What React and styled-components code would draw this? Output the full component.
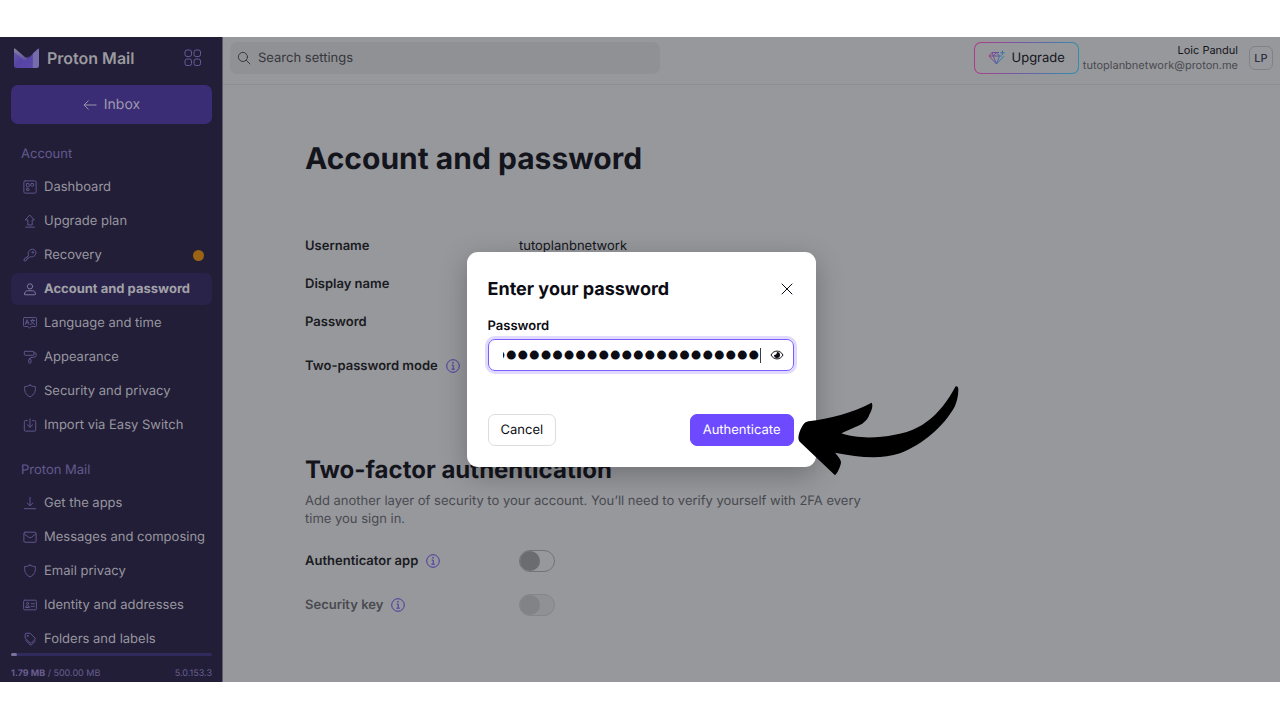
import React, { useLayoutEffect, useRef } from "react";
import styled, { createGlobalStyle } from "styled-components";

const Global = createGlobalStyle`
  *, *::before, *::after { box-sizing: border-box; }
  body { margin: 0; background: #fff; font-family: Inter, "Liberation Sans", sans-serif; font-size: 13px; color: #14151c; text-rendering: geometricPrecision; }
  button, input { font: inherit; color: inherit; text-rendering: inherit; }
  h1, h2, p, ul, dl, dd { margin: 0; padding: 0; }
  a { color: inherit; text-decoration: none; }
`;

const Page = styled.div`
  display: flex;
  flex-direction: column;
  height: 100vh;
  padding: 37px 0 38px;
`;

const Shell = styled.div`
  position: relative;
  display: flex;
  flex: 1;
  min-height: 0;
  overflow: hidden;
  background: #97989c;
`;

const Sidebar = styled.aside`
  display: flex;
  flex-direction: column;
  flex: 0 0 223px;
  min-width: 0;
  padding: 0 10px 0 11px;
  background: #221e38;
  border-right: 1px solid #5d5b6a;
`;

const Brand = styled.div`
  display: flex;
  align-items: center;
  flex: 0 0 48px;
  padding: 0 10px 6px 2px;
  gap: 7px;
`;

const BrandName = styled.span`
  flex: 1;
  font-size: 16px;
  font-weight: 600;
  color: #9b9a9f;
`;

const PlainButton = styled.button`
  display: flex;
  padding: 0;
  border: 0;
  background: none;
  color: ${(p) => p.$color};
`;

const InboxLink = styled.a`
  display: flex;
  align-items: center;
  justify-content: center;
  flex: 0 0 39px;
  gap: 7px;
  border-radius: 7px;
  background: #3b2d75;
  color: #9d99ac;
  font-size: 14px;
`;

const Nav = styled.nav`
  flex: 1;
  min-height: 0;
  margin-top: 13px;
  overflow: hidden;
`;

const NavHeading = styled.h2`
  display: flex;
  align-items: center;
  height: 34px;
  padding-left: 10px;
  font-size: 13px;
  font-weight: 400;
  color: #625a8e;
`;

const NavList = styled.ul`
  display: flex;
  flex-direction: column;
  gap: 2px;
  list-style: none;
  margin-bottom: 12px;
`;

const NavLink = styled.a`
  display: flex;
  align-items: center;
  height: 32px;
  padding: 0 8px 0 12px;
  gap: 7px;
  border-radius: 7px;
  background: ${(p) => (p.$active ? "#292349" : "transparent")};
  color: ${(p) => (p.$active ? "#a3a2a8" : "#98969f")};
  font-weight: ${(p) => (p.$active ? 700 : 400)};
  svg { flex: none; color: ${(p) => (p.$active ? "#827ca5" : "#60588c")}; }
`;

const NavText = styled.span`
  flex: 1;
  min-width: 0;
  white-space: nowrap;
`;

const Dot = styled.span`
  width: 11px;
  height: 11px;
  border-radius: 50%;
  background: #9b6414;
`;

const Storage = styled.div`
  flex: 0 0 29px;
`;

const Meter = styled.div`
  height: 3px;
  border-radius: 2px;
  background: #312a5c;
`;

const MeterFill = styled.div`
  height: 3px;
  border-radius: 2px;
  background: #7a739d;
`;

const StorageText = styled.div`
  display: flex;
  justify-content: space-between;
  padding-top: 12px;
  font-size: 9px;
  line-height: 12px;
  color: #675f90;
`;

const Main = styled.main`
  flex: 1;
  min-width: 0;
`;

const TopBar = styled.header`
  display: flex;
  align-items: center;
  height: 48px;
  padding: 0 7px 6px;
  border-bottom: 1px solid #8d8e92;
`;

const Search = styled.label`
  display: flex;
  align-items: center;
  flex: 0 1 430px;
  height: 32px;
  margin-right: auto;
  padding: 0 7px;
  gap: 7px;
  border-radius: 7px;
  background: #909195;
  color: #36373d;
`;

const SearchInput = styled.input`
  flex: 1;
  min-width: 0;
  padding: 0;
  border: 0;
  outline: 0;
  background: none;
  &::placeholder { color: #36373d; opacity: 1; }
`;

const UpgradeButton = styled.button`
  display: flex;
  align-items: center;
  height: 32px;
  padding: 0 13px;
  gap: 7px;
  border: 1px solid transparent;
  border-radius: 7px;
  background: linear-gradient(#97989c, #97989c) padding-box, linear-gradient(100deg, #b23a82, #6c5fa8 50%, #2f8fa8) border-box;
`;

const User = styled.div`
  display: flex;
  flex-direction: column;
  margin: 0 11px 0 4px;
  font-size: 11px;
  line-height: 15px;
  text-align: right;
`;

const Email = styled.span`
  color: #494a50;
`;

const Avatar = styled.button`
  width: 24px;
  height: 24px;
  padding: 0;
  border: 1px solid #818286;
  border-radius: 6px;
  background: none;
  color: #2b3040;
  font-size: 11px;
  font-weight: 500;
`;

const Content = styled.div`
  max-width: 720px;
  padding: 54px 82px 0;
`;

const Title = styled.h1`
  margin-bottom: 48px;
  font-size: 30px;
  line-height: 40px;
  font-weight: 700;
  white-space: nowrap;
`;

const Subtitle = styled.h2`
  margin: 63px 0 6px;
  font-size: 24px;
  line-height: 32px;
  font-weight: 700;
`;

const Description = styled.p`
  max-width: 570px;
  margin: 0 -20px 11px 0;
  line-height: 18px;
  color: #494a50;
`;

const Row = styled.div`
  display: flex;
  align-items: center;
  height: ${(p) => p.$height}px;
`;

const RowLabel = styled.div`
  display: flex;
  align-items: center;
  width: 214px;
  gap: 8px;
  font-weight: 600;
  color: ${(p) => (p.$muted ? "#494a50" : "#1a1b22")};
`;

const Switch = styled.input`
  appearance: none;
  display: flex;
  align-items: center;
  width: 36px;
  height: 22px;
  margin: 0;
  border: 1px solid #727377;
  border-radius: 11px;
  background: transparent;
  &::before {
    content: "";
    width: 20px;
    height: 20px;
    border-radius: 50%;
    background: #6b6c70;
  }
  &:disabled {
    border-color: #858689;
    background: #909195;
  }
  &:disabled::before { background: #828387; }
`;

const Overlay = styled.div`
  position: absolute;
  inset: 0;
  display: flex;
  align-items: center;
  justify-content: center;
  padding-left: 2px;
`;

const Dialog = styled.form`
  position: relative;
  width: 349px;
  padding: 21px 22px 21px 21px;
  border-radius: 11px;
  background: #fff;
  color: #0c0c14;
  box-shadow: 0 8px 28px rgba(0, 0, 0, 0.26);
`;

const DialogHeader = styled.div`
  display: flex;
  align-items: center;
  justify-content: space-between;
  height: 32px;
  margin-bottom: 13px;
`;

const DialogTitle = styled.h2`
  font-size: 18px;
  font-weight: 700;
`;

const FieldLabel = styled.label`
  display: block;
  margin-bottom: 5px;
  line-height: 16px;
  font-weight: 600;
`;

const Field = styled.div`
  display: flex;
  align-items: center;
  height: 32px;
  padding: 0 9px 0 14px;
  border: 1px solid #7d5cff;
  border-radius: 7px;
  box-shadow: 0 0 0 3px #e1daff;
`;

const PasswordInput = styled.input`
  flex: 1;
  min-width: 0;
  height: 28px;
  padding: 0;
  border: 0;
  outline: 0;
  background: none;
  caret-color: transparent;
  font-family: "Liberation Sans", sans-serif;
  font-size: 33px;
`;

const Caret = styled.span`
  width: 1px;
  height: 15px;
  margin-right: 9px;
  background: #3c3c44;
`;

const Actions = styled.div`
  display: flex;
  justify-content: space-between;
  margin-top: 43px;
`;

const ActionButton = styled.button`
  height: 32px;
  padding: 0 12px;
  border: 1px solid ${(p) => (p.$primary ? "#6d4aff" : "#dddcdf")};
  border-radius: 7px;
  background: ${(p) => (p.$primary ? "#6d4aff" : "#fff")};
  color: ${(p) => (p.$primary ? "#fff" : "#0c0c14")};
`;

const Arrow = styled.svg`
  position: absolute;
  left: 330px;
  top: 132px;
  pointer-events: none;
`;

const Icon = ({ size = 14, children }) => (
  <svg width={size} height={size} viewBox="0 0 16 16" fill="none" stroke="currentColor" strokeWidth="1.1" strokeLinecap="round" strokeLinejoin="round" aria-hidden="true">
    {children}
  </svg>
);

const shield = <path d="M8 1.2 C6.4 2.3 4.3 2.9 2 2.9 C1.3 7.8 2.6 12.1 8 14.8 C13.4 12.1 14.7 7.8 14 2.9 C11.7 2.9 9.6 2.3 8 1.2Z" />;

const icons = {
  dashboard: <><rect x="1" y="1" width="14" height="14" rx="1.5" /><rect x="4" y="4" width="3" height="4" rx=".5" /><rect x="9" y="4" width="3" height="3" rx=".5" /><rect x="4" y="10" width="3" height="2" rx=".5" /></>,
  upgrade: <path d="M8 1.5 L13 6.8 H10.5 V12.5 H5.5 V6.8 H3Z M3 15 H13" />,
  key: <><path d="M6.2 8.5 C5.4 6.3 6 4 7.6 2.6 C9.4 1 12 1 13.6 2.5 C15.2 4.1 15.2 6.8 13.6 8.5 C12 10.1 9.9 10.5 8 9.9 L6.7 11.2 H5.3 V12.7 H4 V14 L3.2 14.7 H1.3 V13Z" /><circle cx="11.2" cy="5" r="1" /></>,
  user: <><circle cx="8" cy="5" r="3" /><path d="M1.8 13.8 C1.8 11.6 3.2 10 5 10 H11 C12.8 10 14.2 11.6 14.2 13.8 C14.2 14.4 13.9 14.6 13.4 14.6 H2.6 C2.1 14.6 1.8 14.4 1.8 13.8Z" /></>,
  language: <><path d="M1.5 1.8 H14.5 Q15.5 1.8 15.5 2.8 V11 Q15.5 12 14.5 12 H9.5 L7.5 14 L5.6 12 H1.5 Q.5 12 .5 11 V2.8 Q.5 1.8 1.5 1.8Z" /><path d="M2.6 9.5 L4.7 4.2 L6.8 9.5 M3.4 7.8 H6 M8.7 5 H13.4 M11 3.8 V5 M12.6 5 C12 7.3 10.6 8.8 8.6 9.6 M9.5 6 C10.3 7.8 11.5 8.9 13.3 9.6" /></>,
  roller: <><rect x="1.5" y="1.5" width="11" height="4.5" rx="1" /><path d="M12.5 3.3 H14 Q15 3.3 15 4.3 V6.5 Q15 7.5 14 7.8 L8.5 8.8 Q7.8 9 7.8 10" /><rect x="6.6" y="10.3" width="2.5" height="4.7" rx=".7" /></>,
  shield,
  importing: <path d="M5 3 H2.5 Q1.5 3 1.5 4 V14 Q1.5 15 2.5 15 H13.5 Q14.5 15 14.5 14 V4 Q14.5 3 13.5 3 H11 M8 1 V10.5 M5 7.7 L8 10.6 L11 7.7" />,
  download: <path d="M8 1.5 V11 M4.8 8 L8 11.2 L11.2 8 M1.5 14.5 H14.5" />,
  mail: <><rect x="1" y="2.5" width="14" height="11.5" rx="1.3" /><path d="M1.5 4.5 L6.5 8.4 Q8 9.5 9.5 8.4 L14.5 4.5" /></>,
  identity: <><rect x=".7" y="2.5" width="14.6" height="11" rx="1.2" /><circle cx="5.2" cy="6.2" r="1.2" /><path d="M3 10.4 Q3 8.8 5.2 8.8 Q7.4 8.8 7.4 10.4Z M9.3 6.5 H13 M9.3 9.5 H13" /></>,
  tags: <><path d="M2.5 2.4 Q2.5 1.4 3.5 1.4 L8.3 1.5 L13.7 7 Q14.4 7.7 13.7 8.5 L9.6 12.4 Q8.8 13.1 8 12.4 L2.7 7.2Z M3 9.6 L8 14.5 Q8.8 15.2 9.6 14.5 L14.1 10.4" /><circle cx="5.3" cy="4.5" r=".6" /></>,
};

const groups = [
  ["Account", [
    ["dashboard", "Dashboard"],
    ["upgrade", "Upgrade plan"],
    ["key", "Recovery", "dot"],
    ["user", "Account and password", "active"],
    ["language", "Language and time"],
    ["roller", "Appearance"],
    ["shield", "Security and privacy"],
    ["importing", "Import via Easy Switch"],
  ]],
  ["Proton Mail", [
    ["download", "Get the apps"],
    ["mail", "Messages and composing"],
    ["shield", "Email privacy"],
    ["identity", "Identity and addresses"],
    ["tags", "Folders and labels"],
  ]],
];

const Logo = () => (
  <svg width="27" height="22" viewBox="0 0 27 22" aria-hidden="true">
    <defs>
      <linearGradient id="logoFold" x1="0" y1="0" x2="1" y2="1">
        <stop offset="0" stopColor="#85809f" />
        <stop offset="1" stopColor="#5a4aa0" />
      </linearGradient>
      <linearGradient id="logoBody" x1="0" y1="0" x2="1" y2="1">
        <stop offset="0" stopColor="#6a5cab" />
        <stop offset=".5" stopColor="#5543a6" />
        <stop offset="1" stopColor="#5b4aa8" />
      </linearGradient>
    </defs>
    <path d="M1 1.5 L12 11 Q13.5 12.2 15 11 L20 7 V21 H3.5 Q1 21 1 18.5Z" fill="url(#logoBody)" />
    <path d="M1 1.5 Q1.6 1.2 2.3 1.8 L12 10 Q13.5 11.2 15 10 L16.5 8.8 L13.5 12.4 Q12 14 10.3 12.6 L1 5Z" fill="url(#logoFold)" />
    <path d="M19.8 6.4 L25 1.8 Q26 1.1 26 2.3 V18.5 Q26 21 23.5 21 H19.8Z" fill="#766cab" />
  </svg>
);

const Info = ({ topic }) => (
  <PlainButton type="button" $color="#4b37a2" aria-label={`More about ${topic}`}>
    <svg width="14" height="14" viewBox="0 0 14 14" fill="none" stroke="currentColor" aria-hidden="true">
      <circle cx="7" cy="7" r="6.3" />
      <path d="M5.7 6 H7.2 V10 M5.4 10.2 H8.8" />
      <circle cx="7" cy="3.8" r=".4" fill="currentColor" />
    </svg>
  </PlainButton>
);

function PasswordDialog() {
  const input = useRef(null);
  useLayoutEffect(() => {
    const el = input.current;
    el.focus();
    el.setSelectionRange(el.value.length, el.value.length);
    el.scrollLeft = el.scrollWidth;
  }, []);
  return (
    <Overlay>
      <Dialog role="dialog" aria-labelledby="dialog-title" onSubmit={(e) => e.preventDefault()}>
        <DialogHeader>
          <DialogTitle id="dialog-title">Enter your password</DialogTitle>
          <PlainButton type="button" $color="#0c0c14" aria-label="Close">
            <svg width="14" height="14" viewBox="0 0 14 14" fill="none" stroke="currentColor" strokeLinecap="round" aria-hidden="true">
              <path d="M2 2 L12 12 M12 2 L2 12" />
            </svg>
          </PlainButton>
        </DialogHeader>
        <FieldLabel htmlFor="password">Password</FieldLabel>
        <Field>
          <PasswordInput id="password" ref={input} type="password" defaultValue="correcthorsebatterystaple42pass" />
          <Caret />
          <PlainButton type="button" $color="#0c0c14" aria-label="Reveal password">
            <svg width="14" height="14" viewBox="0 0 14 14" fill="none" stroke="currentColor" aria-hidden="true">
              <path d="M1 7 C3.8 1.8 10.2 1.8 13 7 C10.2 12.2 3.8 12.2 1 7Z" />
              <path d="M7 4 A3 3 0 1 1 4 7 Q6.8 7.2 7 4Z" fill="currentColor" stroke="none" />
            </svg>
          </PlainButton>
        </Field>
        <Actions>
          <ActionButton type="button">Cancel</ActionButton>
          <ActionButton type="submit" $primary>Authenticate</ActionButton>
        </Actions>
        <Arrow width="163" height="93" viewBox="51 42 489 279" aria-hidden="true">
          <path d="M85 154 C150 145 215 130 275 98 C279 105 277 118 268 134 C262 150 250 160 238 166 L184 190 C215 201 260 205 305 200 C360 194 405 182 440 155 C475 130 505 90 526 50 C530 46 536 52 535 60 C535 80 530 95 524 110 C490 170 430 222 360 250 C300 270 235 262 165 248 C172 256 183 268 183 277 C182 290 172 310 165 316 L60 216 C53 209 55 195 59 185 C66 168 73 156 85 154Z" />
        </Arrow>
      </Dialog>
    </Overlay>
  );
}

export default function App() {
  return (
    <Page>
      <Global />
      <Shell>
        <Sidebar>
          <Brand>
            <Logo />
            <BrandName>Proton Mail</BrandName>
            <PlainButton type="button" $color="#655b99" aria-label="Proton apps">
              <svg width="18" height="18" viewBox="0 0 18 18" fill="none" stroke="currentColor" aria-hidden="true">
                <rect x="1" y="1" width="6.5" height="6.5" rx="2" />
                <rect x="10" y="1" width="6.5" height="6.5" rx="2" />
                <rect x="1" y="10" width="6.5" height="6.5" rx="2" />
                <rect x="10" y="10" width="6.5" height="6.5" rx="2" />
              </svg>
            </PlainButton>
          </Brand>
          <InboxLink href="#inbox">
            <Icon><path d="M15 8 H1.5 M6 3.2 L1.2 8 L6 12.8" /></Icon>
            Inbox
          </InboxLink>
          <Nav>
            {groups.map(([heading, items]) => (
              <React.Fragment key={heading}>
                <NavHeading>{heading}</NavHeading>
                <NavList>
                  {items.map(([icon, label, state]) => (
                    <li key={label}>
                      <NavLink href="#settings" $active={state === "active"}>
                        <Icon>{icons[icon]}</Icon>
                        <NavText>{label}</NavText>
                        {state === "dot" && <Dot />}
                      </NavLink>
                    </li>
                  ))}
                </NavList>
              </React.Fragment>
            ))}
          </Nav>
          <Storage>
            <Meter><MeterFill style={{ width: "3%" }} /></Meter>
            <StorageText>
              <span><b>1.79 MB</b> / 500.00 MB</span>
              <span>5.0.153.3</span>
            </StorageText>
          </Storage>
        </Sidebar>
        <Main>
          <TopBar>
            <Search>
              <Icon><circle cx="6.8" cy="6.8" r="5.2" /><path d="M10.7 10.7 L14.8 14.8" /></Icon>
              <SearchInput type="search" aria-label="Search settings" placeholder="Search settings" />
            </Search>
            <UpgradeButton type="button">
              <svg width="17" height="16" viewBox="0 0 17 16" fill="none" stroke="url(#gem)" strokeLinejoin="round" aria-hidden="true">
                <defs>
                  <linearGradient id="gem" gradientUnits="userSpaceOnUse" x1="0" y1="4" x2="17" y2="8">
                    <stop offset="0" stopColor="#a3357f" />
                    <stop offset=".5" stopColor="#5a58a0" />
                    <stop offset="1" stopColor="#2589a3" />
                  </linearGradient>
                </defs>
                <path d="M11 2.5 H4 L1 6 L8.5 14 L16 6.2 M1 6 H14 M4 2.5 L5.3 6 L8.5 14 L11.5 6 L8.3 2.5 L5.3 6 M14.5 .5 V5 M12.2 2.8 H16.8" />
              </svg>
              Upgrade
            </UpgradeButton>
            <User>
              <span>Loic Pandul</span>
              <Email>tutoplanbnetwork@proton.me</Email>
            </User>
            <Avatar type="button">LP</Avatar>
          </TopBar>
          <Content>
            <Title>Account and password</Title>
            <Row $height={38}><RowLabel>Username</RowLabel><span>tutoplanbnetwork</span></Row>
            <Row $height={38}><RowLabel>Display name</RowLabel></Row>
            <Row $height={38}><RowLabel>Password</RowLabel></Row>
            <Row $height={50}><RowLabel>Two-password mode <Info topic="two-password mode" /></RowLabel></Row>
            <Subtitle>Two-factor authentication</Subtitle>
            <Description>
              Add another layer of security to your account. You’ll need to verify yourself with 2FA every time you sign in.
            </Description>
            <Row $height={44}>
              <RowLabel><label htmlFor="app-2fa">Authenticator app</label> <Info topic="authenticator app" /></RowLabel>
              <Switch id="app-2fa" type="checkbox" />
            </Row>
            <Row $height={44}>
              <RowLabel $muted><label htmlFor="key-2fa">Security key</label> <Info topic="security key" /></RowLabel>
              <Switch id="key-2fa" type="checkbox" disabled />
            </Row>
          </Content>
        </Main>
        <PasswordDialog />
      </Shell>
    </Page>
  );
}
